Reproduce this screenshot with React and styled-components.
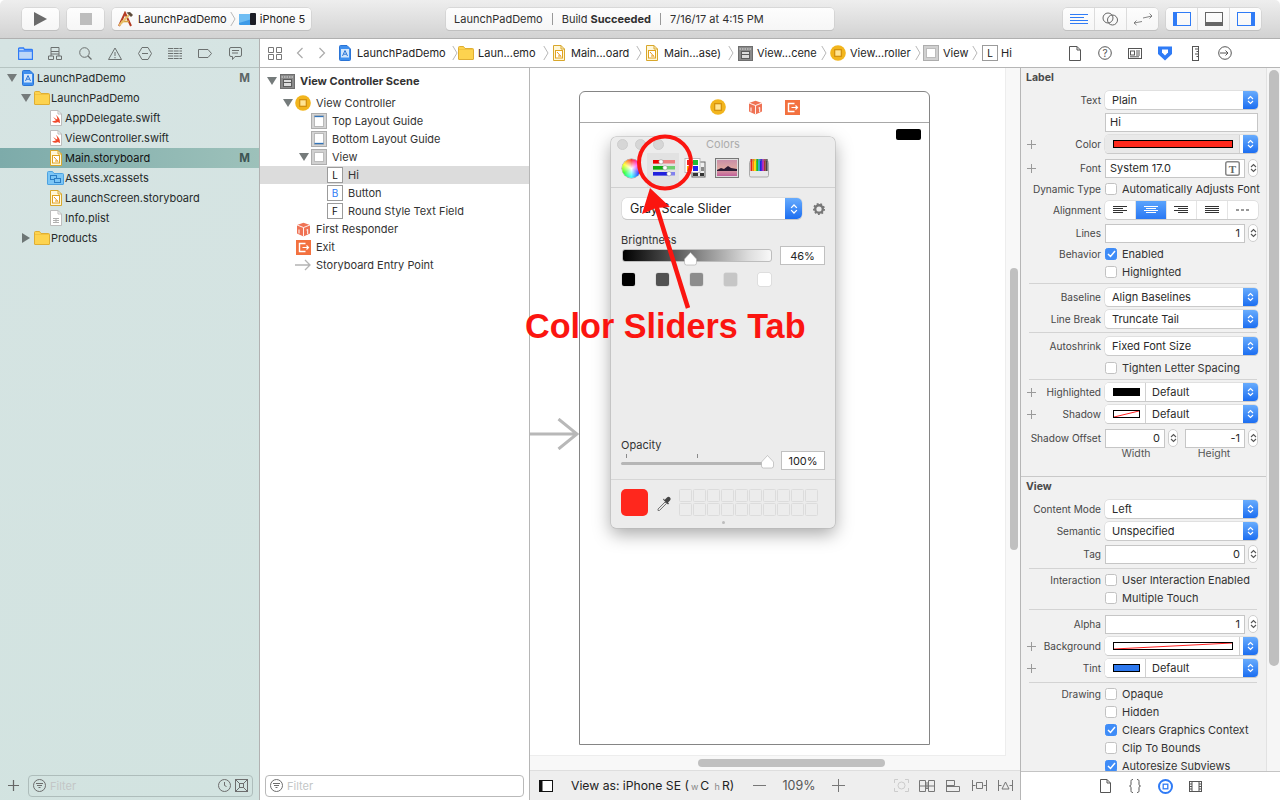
import React from 'react';
import styled, { createGlobalStyle } from 'styled-components';

const Global = createGlobalStyle`
  html, body { margin: 0; padding: 0; background: #fff; }
  * { box-sizing: border-box; }
  body { font-family: "Inter", "Liberation Sans", sans-serif; font-size: 11px; color: #242424; -webkit-font-smoothing: antialiased; }
`;

const Window = styled.div`position: relative; width: 1280px; height: 800px; overflow: hidden; display: flex; flex-direction: column; background: #fff;`;

/* ---------- toolbar ---------- */
const Toolbar = styled.header`
  height: 39px; flex: none; display: flex; align-items: flex-start; padding: 8px 19px 0 22px; gap: 8px;
  background: linear-gradient(#eeeeee, #d2d2d2); border-bottom: 1px solid #b0b0b0; border-radius: 5px 5px 0 0;
`;
const ToolButton = styled.div`
  height: 22px; width: ${p => p.$w}px; background: linear-gradient(#fdfdfd, #f6f6f6); border-radius: 4px;
  box-shadow: 0 0 0 .5px #c8c8c8, 0 1px 0 #b9b9b9; display: flex; align-items: center; justify-content: center; flex: none;
`;
const Scheme = styled(ToolButton)`justify-content: flex-start; padding-left: 5px; font-size: 11px; white-space: nowrap;`;
const SchemeName = styled.span`margin: 0 3px 0 4px;`;
const SchemeGap = styled.span`width: 3px; flex: none;`;
const Activity = styled(ToolButton)`justify-content: flex-start; padding-left: 8px; margin-left: 127px; font-size: 11px; color: #303030; white-space: nowrap;`;
const Bold = styled.b`font-weight: 700; margin-left: 3px;`;
const VBar = styled.span`width: 1px; height: 12px; background: #999; margin: 0 9px 0 ${p => p.$ml || 9}px;`;
const RightTools = styled.div`margin-left: auto; display: flex; gap: 8px;`;
const Segment = styled.span`flex: 1; height: 100%; display: flex; align-items: center; justify-content: center; & + & { border-left: 1px solid #dcdcdc; }`;

/* ---------- main columns ---------- */
const Body = styled.div`flex: 1; display: flex; min-height: 0;`;
const Navigator = styled.aside`width: 260px; flex: none; display: flex; flex-direction: column; background: linear-gradient(160deg, #d6e4e3, #d2e3e0); border-right: 1px solid #b2b2b2;`;
const NavTabs = styled.div`height: 29px; flex: none; display: flex; align-items: center; padding-left: 10px; border-bottom: 1px solid #b6c4c2;`;
const TabSlot = styled.span`width: 30px; display: flex; justify-content: center; flex: none;`;
const NavList = styled.div`flex: 1;`;
const NavRow = styled.div`
  height: 20px; display: flex; align-items: center; padding: 0 9px 0 ${p => p.$depth * 14 + 6}px; font-size: 11px; color: ${p => p.$sel ? '#111' : '#252a2a'};
  background: ${p => p.$sel ? 'linear-gradient(90deg,#7dabaa,#9dc1ba)' : 'transparent'};
`;
const TriSlot = styled.span`width: 12px; flex: none; display: flex; justify-content: center;`;
const Tri = styled.span`
  width: 0; height: 0;
  ${p => p.$right
    ? 'border-top:5px solid transparent;border-bottom:5px solid transparent;border-left:8px solid #6d7675;'
    : 'border-left:5px solid transparent;border-right:5px solid transparent;border-top:8px solid #757b7b;'}
`;
const IconSlot = styled.span`width: 19px; flex: none; display: flex; justify-content: center; align-items: center;`;
const Badge = styled.b`margin-left: auto; color: ${p => p.$c || '#5d6665'}; font-size: 11.5px; font-weight: 700;`;
const FilterBar = styled.div`height: 29px; flex: none; display: flex; align-items: center; padding: 0 ${p => p.$pr || 6}px 0 ${p => p.$pl || 5}px; gap: 5px;`;
const FilterField = styled.div`flex: 1; height: 22px; margin-left: ${p => p.$ml || 0}px; border: 1px solid ${p => p.$tone || '#b9b9b9'}; border-radius: 4px; display: flex; align-items: center; padding: 0 4px; gap: 4px;`;
const FilterText = styled.span`color: #c3c6c6; font-size: 11px; flex: 1;`;

const Editor = styled.main`flex: 1; min-width: 0; display: flex; flex-direction: column;`;
const JumpBar = styled.nav`height: 29px; flex: none; display: flex; align-items: center; padding-left: 8px; border-bottom: 1px solid #b6b6b6; background: #fff; font-size: 11px; white-space: nowrap;`;
const JumpNav = styled.span`width: ${p => p.$w}px; flex: none; display: flex; align-items: center; gap: 14px;`;
const JumpItem = styled.span`width: ${p => p.$w}px; flex: none; display: flex; align-items: center; gap: ${p => p.$gap || 4}px; padding-right: 4px;`;
const JumpChevron = styled.span`margin-left: auto; display: flex;`;
const Split = styled.div`flex: 1; min-height: 0; display: flex;`;
const Outline = styled.section`width: 270px; flex: none; display: flex; flex-direction: column; border-right: 1px solid #b6b6b6;`;
const SceneTitle = styled.div`height: 26px; display: flex; align-items: center; padding-left: 6px; font-weight: 700; font-size: 11px; color: #333;`;
const OutList = styled.div`flex: 1;`;
const OutRow = styled.div`height: 18px; display: flex; align-items: center; padding-left: ${p => p.$depth * 16 + 6}px; font-size: 11px; color: #333; background: ${p => p.$sel ? '#dcdcdc' : 'transparent'};`;
const OutIcon = styled.span`width: 22px; flex: none; display: flex; justify-content: center; align-items: center; padding-right: 4px;`;
const LetterBox = styled.span`width: 16px; height: 16px; border: 1px solid #9b9b9b; background: #fff; display: flex; align-items: center; justify-content: center; font-size: 10px; color: ${p => p.$c || '#111'}; flex: none;`;

const Canvas = styled.section`flex: 1; min-width: 0; display: flex; flex-direction: column; border-right: 1px solid #b6b6b6;`;
const CanvasMain = styled.div`flex: 1; min-height: 0; display: flex;`;
const CanvasCol = styled.div`flex: 1; min-width: 0; display: flex; flex-direction: column;`;
const Stage = styled.div`flex: 1; position: relative; padding: 23px 0 0 49px; background: #fff; border-bottom: 1px solid #ededed; border-right: 1px solid #ededed; overflow: hidden;`;
const HScrollTrack = styled.div`height: 14px; flex: none; background: #f8f8f8; padding: 3px 0 0 168px;`;
const HThumb = styled.div`width: 187px; height: 8px; border-radius: 4px; background: #c0c0c0;`;
const VScrollTrack = styled.div`width: 14px; flex: none; background: #f8f8f8; padding: 200px 0 0 4px;`;
const VThumb = styled.div`width: 8px; height: 282px; border-radius: 4px; background: #c0c0c0;`;
const Device = styled.div`width: 351px; height: 654px; border: 1px solid #858585; border-radius: 6px 6px 0 0; display: flex; flex-direction: column;`;
const DeviceBar = styled.div`height: 31px; flex: none; border-bottom: 1px solid #a8a8a8; display: flex; align-items: center; justify-content: center; gap: 22px;`;
const StatusRow = styled.div`display: flex; justify-content: flex-end; padding: 6px 8px 0 0;`;
const Battery = styled.div`width: 25px; height: 11px; border-radius: 2px; background: #000;`;
const EntryArrow = styled.svg`position: absolute; left: 0; top: 350px;`;
const CanvasBar = styled.div`height: 30px; flex: none; display: flex; align-items: center; background: #eeeeee; border-top: 1px solid #dedede; padding-left: 9px; font-size: 12.2px; color: #222;`;
const ViewAs = styled.span`margin-left: 18px; width: 182px; flex: none; white-space: nowrap;`;
const SmallGray = styled.small`font-size: 9px; color: #888; margin: 0 2px;`;
const Zoom = styled.span`width: 46px; text-align: center; color: #555; font-size: 12.5px;`;
const BarTool = styled.span`width: 26px; flex: none; display: flex; justify-content: center;`;
const BarSpacer = styled.span`width: ${p => p.$w}px; flex: none;`;

/* ---------- inspector ---------- */
const Inspector = styled.aside`width: 259px; flex: none; display: flex; flex-direction: column; background: #f1f1f1;`;
const InspTabs = styled.div`height: 29px; flex: none; display: flex; align-items: center; padding-left: 39px; background: #fff; border-bottom: 1px solid #b6b6b6;`;
const InspScroll = styled.div`flex: 1; min-height: 0; display: flex;`;
const InspBody = styled.div`flex: 1; min-width: 0; overflow: hidden;`;
const InspTrack = styled.div`width: 14px; flex: none; background: #f6f6f6; border-left: 1px solid #e2e2e2; padding: 2px 0 0 2px;`;
const InspThumb = styled.div`width: 10px; height: 596px; border-radius: 5px; background: #bfbfbf;`;
const SectionTitle = styled.div`height: 18px; display: flex; align-items: center; padding-left: 5px; font-weight: 700; font-size: 10.5px; color: #4a4a4a;`;
const Row = styled.div`display: flex; align-items: center; height: ${p => p.$h || 22}px; margin-top: ${p => p.$mt || 0}px; padding-right: 8px;`;
const Label = styled.span`width: 80px; margin-right: 4px; flex: none; display: flex; align-items: center; justify-content: flex-end; font-size: 10.1px; color: #484848; white-space: nowrap;`;
const Plus = styled.span`margin-right: auto; margin-left: 6px; display: flex;`;
const Popup = styled.div`
  flex: 1; min-width: 0; height: 18px; display: flex; align-items: center; background: #fff; border-radius: 4px;
  box-shadow: 0 0 0 .5px #cfcfcf, 0 1px 0 #c4c4c4; overflow: hidden; font-size: 11px; color: #2a2a2a;
`;
const PopupText = styled.span`flex: 1; padding-left: ${p => p.$pl || 7}px; white-space: nowrap;`;
const PopupRest = styled.span`flex: 1;`;
const PopupArrows = styled.span`width: 15px; height: 100%; flex: none; background: linear-gradient(#68acfd, #1c6ef1); display: flex; align-items: center; justify-content: center;`;
const WellCell = styled.span`flex: none; height: 100%; padding-left: 8px; padding-right: ${p => p.$pr}px; display: flex; align-items: center; width: ${p => p.$w}px; background: ${p => p.$gray ? '#e9e9e9' : '#fff'}; border-right: 1px solid #d0d0d0;`;
const Swatch = styled.span`flex: 1; height: 8px; border: 1px solid #000; background: ${p => p.$bg || '#fff'}; display: flex;`;
const Field = styled.div`
  flex: ${p => p.$w ? 'none' : 1}; width: ${p => p.$w ? p.$w + 'px' : 'auto'}; margin-left: ${p => p.$ml || 0}px; min-width: 0; height: 19px; background: #fff; border: 1px solid #c6c6c6; display: flex; align-items: center;
  padding: 0 4px; justify-content: ${p => p.$right ? 'flex-end' : 'flex-start'}; font-size: 11px; color: #2a2a2a;
`;
const FieldText = styled.span`flex: 1; white-space: nowrap;`;
const Stepper = styled.span`width: 10px; height: 18px; margin-left: ${p => p.$ml || 3}px; flex: none; background: #fff; border: .5px solid #cfcfcf; border-radius: 5px; display: flex; align-items: center; justify-content: center;`;
const Check = styled.span`width: 12px; height: 12px; flex: none; border-radius: 2.5px; display: flex; align-items: center; justify-content: center; border: 1px solid ${p => p.$on ? '#3f8cf7' : '#c2c2c2'}; background: ${p => p.$on ? '#3f8cf7' : '#fff'};`;
const CheckText = styled.span`margin-left: 5px; font-size: 11px; color: #333; white-space: nowrap;`;
const Divider = styled.div`height: 1px; margin: ${p => p.$mt || 2}px 9px 0 8px; background: #d3d3d3;`;
const SectionRule = styled.div`height: 1px; margin-top: ${p => p.$mt}px; background: #c9c9c9;`;
const Seg = styled.div`flex: 1; height: 18px; display: flex; background: #fff; border-radius: 4px; overflow: hidden; box-shadow: 0 0 0 .5px #cfcfcf, 0 1px 0 #c4c4c4;`;
const SegCell = styled.span`flex: 1; display: flex; align-items: center; justify-content: center; background: ${p => p.$on ? 'linear-gradient(#5aa3fc,#2a78f3)' : 'transparent'}; & + & { border-left: 1px solid #e4e4e4; }`;
const Caption = styled.span`width: ${p => p.$w}px; margin-left: ${p => p.$ml || 0}px; flex: none; text-align: center; font-size: 10.5px; color: #555;`;
const Library = styled.div`height: 29px; flex: none; background: #fff; border-top: 1px solid #c4c4c4; display: flex; align-items: center; padding-left: 69px;`;

/* ---------- colours panel ---------- */
const Panel = styled.div`position: absolute; left: 611px; top: 137px; width: 224px; height: 391px; background: #ececec; border-radius: 5px; box-shadow: 0 0 0 .5px #b6b6b6, 0 6px 18px rgba(0,0,0,.35); display: flex; flex-direction: column;`;
const PanelTitleBar = styled.div`height: 14px; flex: none; display: flex; align-items: center; padding-left: 6px; gap: 7px;`;
const Light = styled.span`width: 11px; height: 11px; border-radius: 50%; background: #d6d6d6; border: .5px solid #cdcdcd;`;
const PanelTitle = styled.span`margin-left: 35px; color: #ababab; font-size: 11px; line-height: 16px;`;
const PanelTabs = styled.div`height: 35px; margin-top: 2px; flex: none; display: flex; padding-left: 4px; border-bottom: 1px solid #d0d0d0;`;
const PanelTab = styled.span`width: 32px; flex: none; display: flex; align-items: center; justify-content: center; padding-bottom: 4px; background: ${p => p.$on ? '#e2e2e2' : 'transparent'};`;
const PopRow = styled.div`height: 21px; margin-top: 10px; padding-left: 11px; display: flex; align-items: center; flex: none;`;
const PanelPopup = styled.div`width: 180px; height: 21px; background: #fff; border-radius: 5px; box-shadow: 0 0 0 .5px #cfcfcf, 0 1px 0 #bdbdbd; overflow: hidden; display: flex; align-items: center; font-size: 12.5px;`;
const PanelPopupText = styled.span`flex: 1; padding-left: 8px; color: #222;`;
const PanelArrows = styled(PopupArrows)`width: 17px;`;
const Gear = styled.span`margin-left: 11px; display: flex;`;
const SliderLabel = styled.div`height: 13px; margin-top: ${p => p.$mt}px; padding-left: 10px; font-size: 11px; color: #333; flex: none; line-height: 15px;`;
const SliderRow = styled.div`height: 19px; display: flex; align-items: center; padding-left: ${p => p.$pl}px; flex: none;`;
const GrayTrack = styled.div`position: relative; width: 150px; height: 13px; border-radius: 3px; border: .5px solid #bdbdbd; background: linear-gradient(90deg,#000,#4a4a4a 30%,#8f8f8f 55%,#ddd 85%,#f8f8f8); `;
const OpacityTrack = styled.div`position: relative; width: 147px; height: 3px; margin-top: 6px; background: #b6b6b6; border-radius: 2px;`;
const Thumb = styled.svg`position: absolute; left: ${p => p.$x}px; top: ${p => p.$y}px;`;
const Tick = styled.span`position: absolute; left: ${p => p.$x}px; top: -8px; width: 1px; height: 4px; background: #8a8a8a;`;
const PercentBox = styled.div`width: ${p => p.$w}px; height: 19px; margin-left: ${p => p.$ml}px; background: #fff; border: 1px solid #c0c0c0; flex: none; display: flex; align-items: center; justify-content: center; font-size: 11px;`;
const Swatches = styled.div`display: flex; gap: 21px; margin-top: 8px; padding-left: 11px; flex: none;`;
const Chip = styled.span`width: 13px; height: 13px; border-radius: 2px; background: ${p => p.$c}; box-shadow: 0 0 0 .5px rgba(0,0,0,.12);`;
const PanelFoot = styled.div`margin-top: 9px; border-top: 1px solid #d6d6d6; padding: 9px 0 0 10px; display: flex; align-items: flex-start; flex: none;`;
const BigChip = styled.div`width: 27px; height: 27px; border-radius: 5px; background: #ff271d; flex: none;`;
const Dropper = styled.span`width: 31px; height: 27px; flex: none; display: flex; align-items: center; justify-content: center;`;
const Wells = styled.div`display: grid; grid-template-columns: repeat(10, 13px); grid-auto-rows: 13px; gap: 1px;`;
const Well = styled.span`border: 1px solid #dcdcdc; border-radius: 1.5px;`;
const Grip = styled.div`width: 3px; height: 3px; border-radius: 50%; background: #bcbcbc; margin: 5px auto 0;`;
const WheelIcon = styled.span`width: 19px; height: 19px; border-radius: 50%; background: radial-gradient(circle at center,#fff 0,rgba(255,255,255,0) 65%), conic-gradient(#f33,#f3f,#33f,#3ff,#3f3,#ff3,#f33); box-shadow: 0 0 0 .5px #999;`;

/* ---------- annotation ---------- */
const MarkLayer = styled.svg`position: absolute; left: 0; top: 0; pointer-events: none;`;
const Callout = styled.div`position: absolute; left: 525px; top: 306px; font-family: "Liberation Sans", Arial, sans-serif; font-weight: 700; font-size: 34.2px; line-height: 40px; color: #fb1510; white-space: nowrap;`;

/* ---------- drawings ---------- */
const S = ({ w = 16, h = 16, vb, children, ...r }) => <svg width={w} height={h} viewBox={vb || `0 0 ${w} ${h}`} fill="none" style={{ flex: 'none', display: 'block' }} {...r}>{children}</svg>;
const G = '#6c7170';
const Blue = '#2f7bf6';
const Folder = ({ w = 16, h = 14 }) => <S w={w} h={h} vb="0 0 16 14"><path d="M.5 13V1.5A1 1 0 0 1 1.5.5h4L7 2.5h7.5a1 1 0 0 1 1 1V13a.5.5 0 0 1-.5.5H1a.5.5 0 0 1-.5-.5z" fill="#fdd34f" stroke="#dfae33" /><path d="M1 3.500h14" stroke="#f3c440" /></S>;
const Proj = () => <S w={12} h={16} vb="0 0 12 16"><path d="M.5 1.500a1 1 0 0 1 1-1H8L11.500 4v10.500a1 1 0 0 1-1 1h-9a1 1 0 0 1-1-1z" fill="#3f8fee" stroke="#2a74d6" /><rect x="2" y="4" width="8" height="8.500" fill="#d3e6fb" /><path d="M3.500 11 6 5.500 8.500 11M4.500 9.200h3" stroke="#2a74d6" strokeWidth="1" /></S>;
const Doc = ({ children, stroke = '#bdbdbd', fill = '#fff' }) => <S w={12} h={16}><path d="M.5.5H8L11.500 4v11.500H.5z" fill={fill} stroke={stroke} /><path d="M8 .5V4h3.500" stroke={stroke} />{children}</S>;
const Swift = () => <Doc><path d="M2 11.500c2 1.500 4.500 1.500 6 .5 1 .6 1.500 1 2 1-.2-1 0-2-.5-3.500-.7-2-2.200-3.500-3.500-4.500 1 1.500 1.500 3 1.200 4.500C5.800 9.200 4 7.800 3 6.800c1 1.400 2 2.700 3 3.500-1.200.8-2.800 1-4 1.200z" fill="#f0492c" /></Doc>;
const Story = () => <Doc stroke="#d8a72c" fill="#fff7d8"><rect x="2.500" y="5.500" width="7" height="7.500" fill="#fff" stroke="#e0a21f" /><path d="M4 7l4 4.500M5 11h3" stroke="#e79a18" /></Doc>;
const Assets = () => <S w={17} h={14}><path d="M.5 13V1.500a1 1 0 0 1 1-1h4L7 2.500h8.500a1 1 0 0 1 1 1V13a.5.5 0 0 1-.5.5H1a.5.5 0 0 1-.5-.5z" fill="#7cc6f5" stroke="#4da2e0" /><rect x="3.500" y="4.500" width="6" height="4" stroke="#2a7dc4" /><rect x="7.500" y="7.500" width="6" height="4" fill="#7cc6f5" stroke="#2a7dc4" /></S>;
const Plist = () => <Doc><path d="M3 8.500h6M3 10.500h6M3 12.500h6M6 8v5" stroke="#b0b0b0" /></Doc>;
const Scene = () => <S w={15} h={15}><rect x=".5" y=".5" width="14" height="14" fill="#8a8a8a" stroke="#6e6e6e" /><path d="M1.500 3h12" stroke="#ddd" strokeDasharray="1.500 1" /><rect x="3.500" y="5.500" width="8" height="7" fill="#dcdcdc" stroke="#5b5b5b" /><path d="M3 8.500h9" stroke="#5b5b5b" /></S>;
const VC = () => <S w={16} h={16}><circle cx="8" cy="8" r="7.800" fill="#f2b51d" /><rect x="4.700" y="4.700" width="6.600" height="6.600" fill="#ffe493" stroke="#d18d08" strokeWidth="1.200" /></S>;
const Cube = () => <S w={15} h={15}><path d="M7.500.8 14 3v8.500l-6.500 3-6.500-3V3z" fill="#ef7254" /><path d="M1 3l6.500 2.500L14 3M7.500 5.500v9" stroke="#fff" strokeWidth=".9" /><path d="M3 7.500v4M10.500 8l1.200-.5V12" stroke="#fff" strokeWidth="1" /></S>;
const ExitI = () => <S w={15} h={15}><rect width="15" height="15" fill="#f3713f" /><path d="M9.500 3.500h-6v8h6" stroke="#fff" strokeWidth="1.400" /><path d="M6.500 7.500h6M10.500 5.500l2 2-2 2" stroke="#fff" strokeWidth="1.200" /></S>;
const Guide = ({ bottom }) => <S w={16} h={16}><rect x=".5" y=".5" width="15" height="15" fill="#d4d4d4" stroke="#adadad" /><rect x="3.500" y="2.500" width="9" height="11" fill="#fff" stroke="#b9b9b9" /><path d={bottom ? 'M3.500 12.500h9' : 'M3.500 3.500h9'} stroke="#3274b9" strokeWidth="1.300" /></S>;
const ViewBox = () => <S w={16} h={16}><rect x=".5" y=".5" width="15" height="15" fill="#d0d0d0" stroke="#adadad" /><rect x="3.500" y="3.500" width="9" height="9" fill="#fff" stroke="#bcbcbc" /></S>;
const Entry = () => <S w={16} h={12}><path d="M0 6h15M10 1l5 5-5 5" stroke="#b4b4b4" strokeWidth="1.300" /></S>;
const XcodeI = () => <S w={17} h={17}><path d="M2 15 8 2l6 13" stroke="#b43b22" strokeWidth="2" /><path d="M4 10.500h8" stroke="#d9a441" strokeWidth="1.600" /><path d="M2 14.500 12 4" stroke="#e8c06a" strokeWidth="2" /><path d="M9.500 1.500 14 6l2-2-3-3z" fill="#5c4a3a" /></S>;
const PhoneI = () => <S w={17} h={14}><rect x="0" y="2" width="13" height="11" rx="1" fill="#3e9be8" /><path d="M0 2h13v5L0 11z" fill="#6fbdf3" /><rect x="11" y="1" width="6" height="12" rx="1" fill="#1c1d26" /></S>;
const Sep = ({ h = 16 }) => <S w={6} h={h} vb="0 0 6 16"><path d="M.8 1 5 8 .8 15" stroke="#b8b8b8" /></S>;
const UD = ({ c = '#fff', w = 7, h = 10 }) => <S w={w} h={h} vb="0 0 7 10"><path d="M1 4 3.500 1.500 6 4M1 6l2.500 2.500L6 6" stroke={c} strokeWidth="1.100" /></S>;
const PlusI = ({ s = 9, c = '#9a9a9a' }) => <S w={s} h={s} vb="0 0 9 9"><path d="M4.500 0v9M0 4.500h9" stroke={c} /></S>;
const Tick2 = () => <S w={9} h={8}><path d="M1 4l2.500 2.500L8 1" stroke="#fff" strokeWidth="1.500" /></S>;
const Strike = () => <svg width="100%" height="100%" viewBox="0 0 100 10" preserveAspectRatio="none" style={{ display: 'block' }}><path d="M0 10 100 0" stroke="#f22" strokeWidth="1" vectorEffect="non-scaling-stroke" /></svg>;
const Align = ({ kind, c = '#333' }) => {
  const L = { l: [[0, 14], [0, 10], [0, 14], [0, 10]], c: [[0, 14], [2, 10], [0, 14], [2, 10]], r: [[0, 14], [4, 10], [0, 14], [4, 10]], j: [[0, 14], [0, 14], [0, 14], [0, 14]] }[kind];
  return <S w={14} h={8}>{L.map(([x, w], i) => <path key={i} d={`M${x} ${i * 2 + 0.5}h${w}`} stroke={c} />)}</S>;
};
const Filter = ({ c = '#6d6d6d' }) => <S w={13} h={13}><circle cx="6.500" cy="6.500" r="6" stroke={c} /><path d="M3 4.500h7M4 6.500h5M5.500 8.500h2" stroke={c} /></S>;

const Check1 = ({ on, children }) => <><Check $on={on}>{on && <Tick2 />}</Check><CheckText>{children}</CheckText></>;
const Pop = ({ children }) => <Popup><PopupText>{children}</PopupText><PopupArrows><UD /></PopupArrows></Popup>;
const ColorPop = ({ strike, bg, narrow, text }) => (
  <Popup>
    {narrow
      ? <><WellCell $w={41} $pr={5}><Swatch $bg={bg}>{strike && <Strike />}</Swatch></WellCell><PopupText $pl={6}>{text}</PopupText></>
      : <><WellCell $w={135} $pr={6} $gray={!strike}><Swatch $bg={bg}>{strike && <Strike />}</Swatch></WellCell><PopupRest /></>}
    <PopupArrows><UD /></PopupArrows>
  </Popup>
);

export default function App() {
  return (
    <Window>
      <Global />
      <Toolbar>
        <ToolButton $w={37}><S w={15} h={14}><path d="M1 0l13 7-13 7z" fill="#6a6a6a" /></S></ToolButton>
        <ToolButton $w={37}><S w={12} h={12}><rect width="12" height="12" fill="#bdbdbd" /></S></ToolButton>
        <Scheme $w={199}>
          <XcodeI /><SchemeName>LaunchPadDemo</SchemeName><Sep /><SchemeGap /><PhoneI /><SchemeName>iPhone 5</SchemeName>
        </Scheme>
        <Activity $w={388}>LaunchPadDemo<VBar />Build<Bold>Succeeded</Bold><VBar />7/16/17 at 4:15 PM</Activity>
        <RightTools>
          <ToolButton $w={95}>
            <Segment><S w={18} h={12}><path d="M0 1.500h18M0 4.500h14M0 7.500h18M0 10.500h18" stroke={Blue} /></S></Segment>
            <Segment><S w={17} h={14}><circle cx="6" cy="6" r="5" stroke="#666" /><circle cx="10.500" cy="8" r="5" stroke="#666" /></S></Segment>
            <Segment><S w={20} h={13}><path d="M9 8.500 1 10M3.500 7.500 1 10l2.500 2M10 5 19 3M16.500.5 19 3l-2.500 2.500" stroke="#777" strokeWidth=".9" /></S></Segment>
          </ToolButton>
          <ToolButton $w={95}>
            <Segment><S w={18} h={14}><rect x=".5" y=".5" width="17" height="13" stroke={Blue} /><rect x="1" y="1" width="3" height="12" fill={Blue} /></S></Segment>
            <Segment><S w={18} h={14}><rect x=".5" y=".5" width="17" height="13" stroke="#666" /><rect x="1" y="10" width="16" height="3" fill="#666" /></S></Segment>
            <Segment><S w={18} h={14}><rect x=".5" y=".5" width="17" height="13" stroke={Blue} /><rect x="14" y="1" width="3" height="12" fill={Blue} /></S></Segment>
          </ToolButton>
        </RightTools>
      </Toolbar>

      <Body>
        <Navigator>
          <NavTabs>
            <TabSlot><S w={15} h={13}><path d="M.5 12V2a1 1 0 0 1 1-1h4l1 1.500h7a1 1 0 0 1 1 1V12a.5.5 0 0 1-.5.5H1z" fill="#bcd6f8" stroke={Blue} strokeWidth="1.300" /><path d="M1 4h13" stroke={Blue} strokeWidth="1.300" /></S></TabSlot>
            <TabSlot><S w={14} h={13}><path d="M3 .5h8v4H3zM.5 9h5v3.500h-5zM8.500 9h5v3.500h-5zM3 7V4.500M3 7h8v2M3 7v2M11 7V4.500" stroke={G} /></S></TabSlot>
            <TabSlot><S w={13} h={13}><circle cx="5.500" cy="5.500" r="4.800" stroke={G} /><path d="M9 9l3.500 3.500" stroke={G} strokeWidth="1.300" /></S></TabSlot>
            <TabSlot><S w={14} h={13}><path d="M7 1l6.500 11.500H.5zM7 5v4M7 10v1.300" stroke={G} /></S></TabSlot>
            <TabSlot><S w={14} h={13}><path d="M4 .5h6L13.500 6.500 10 12.500H4L.5 6.500zM4 6.500h6" stroke={G} /></S></TabSlot>
            <TabSlot><S w={14} h={11}><path d="M0 .5h14M0 3h14M0 5.500h14M0 8h14M0 10.500h14" stroke={G} strokeDasharray="5 .7" /></S></TabSlot>
            <TabSlot><S w={14} h={9}><path d="M.5.5H10l3.500 4-3.500 4H.5z" stroke={G} /></S></TabSlot>
            <TabSlot><S w={13} h={13}><path d="M2 .5h9A1.500 1.500 0 0 1 12.500 2v6A1.500 1.500 0 0 1 11 9.500H6L3.500 12.500v-3H2A1.500 1.500 0 0 1 .5 8V2A1.500 1.500 0 0 1 2 .5zM3 3.500h7M3 6h6" stroke={G} /></S></TabSlot>
          </NavTabs>
          <NavList>
            <NavRow $depth={0}><TriSlot><Tri /></TriSlot><IconSlot><Proj /></IconSlot>LaunchPadDemo<Badge>M</Badge></NavRow>
            <NavRow $depth={1}><TriSlot><Tri /></TriSlot><IconSlot><Folder /></IconSlot>LaunchPadDemo</NavRow>
            <NavRow $depth={2}><TriSlot /><IconSlot><Swift /></IconSlot>AppDelegate.swift</NavRow>
            <NavRow $depth={2}><TriSlot /><IconSlot><Swift /></IconSlot>ViewController.swift</NavRow>
            <NavRow $depth={2} $sel><TriSlot /><IconSlot><Story /></IconSlot>Main.storyboard<Badge $c="#3e5553">M</Badge></NavRow>
            <NavRow $depth={2}><TriSlot /><IconSlot><Assets /></IconSlot>Assets.xcassets</NavRow>
            <NavRow $depth={2}><TriSlot /><IconSlot><Story /></IconSlot>LaunchScreen.storyboard</NavRow>
            <NavRow $depth={2}><TriSlot /><IconSlot><Plist /></IconSlot>Info.plist</NavRow>
            <NavRow $depth={1}><TriSlot><Tri $right /></TriSlot><IconSlot><Folder /></IconSlot>Products</NavRow>
          </NavList>
          <FilterBar $pl={8} $pr={6}>
            <PlusI s={11} c="#666" />
            <FilterField $tone="#aebdbb" $ml={4}>
              <Filter /><FilterText>Filter</FilterText>
              <S w={13} h={13}><circle cx="6.500" cy="6.500" r="6" stroke="#6d6d6d" /><path d="M6.500 3v3.500l2 1" stroke="#6d6d6d" /></S>
              <S w={13} h={13}><rect x=".5" y=".5" width="12" height="12" stroke="#6d6d6d" /><path d="M1 1l3.500 3.500M12 1 8.500 4.500M1 12l3.500-3.500M12 12 8.500 8.500" stroke="#6d6d6d" /><rect x="4.500" y="4.500" width="4" height="4" stroke="#6d6d6d" /></S>
            </FilterField>
          </FilterBar>
        </Navigator>

        <Editor>
          <JumpBar>
            <JumpNav $w={71}>
              <S w={14} h={13}><path d="M.5.5h5v5h-5zM8.500.5h5v5h-5zM.5 7.500h5v5h-5zM8.500 7.500h5v5h-5z" stroke="#777" /></S>
              <S w={8} h={12}><path d="M6.500 1 1.500 6l5 5" stroke="#aaa" strokeWidth="1.200" /></S>
              <S w={8} h={12}><path d="M1.500 1l5 5-5 5" stroke="#aaa" strokeWidth="1.200" /></S>
            </JumpNav>
            <JumpItem $w={119} $gap={6}><Proj />LaunchPadDemo<JumpChevron><Sep /></JumpChevron></JumpItem>
            <JumpItem $w={95}><Folder />Laun...emo<JumpChevron><Sep /></JumpChevron></JumpItem>
            <JumpItem $w={93} $gap={6}><Story />Main...oard<JumpChevron><Sep /></JumpChevron></JumpItem>
            <JumpItem $w={92} $gap={6}><Story />Main...ase)<JumpChevron><Sep /></JumpChevron></JumpItem>
            <JumpItem $w={92}><Scene />View...cene<JumpChevron><Sep /></JumpChevron></JumpItem>
            <JumpItem $w={93}><VC />View...roller<JumpChevron><Sep /></JumpChevron></JumpItem>
            <JumpItem $w={59}><ViewBox />View<JumpChevron><Sep /></JumpChevron></JumpItem>
            <JumpItem $w={40} $gap={3}><LetterBox>L</LetterBox>Hi</JumpItem>
          </JumpBar>
          <Split>
            <Outline>
              <OutList>
                <SceneTitle><TriSlot><Tri /></TriSlot><OutIcon><Scene /></OutIcon>View Controller Scene</SceneTitle>
                <OutRow $depth={1}><TriSlot><Tri /></TriSlot><OutIcon><VC /></OutIcon>View Controller</OutRow>
                <OutRow $depth={2}><TriSlot /><OutIcon><Guide /></OutIcon>Top Layout Guide</OutRow>
                <OutRow $depth={2}><TriSlot /><OutIcon><Guide bottom /></OutIcon>Bottom Layout Guide</OutRow>
                <OutRow $depth={2}><TriSlot><Tri /></TriSlot><OutIcon><ViewBox /></OutIcon>View</OutRow>
                <OutRow $depth={3} $sel><TriSlot /><OutIcon><LetterBox>L</LetterBox></OutIcon>Hi</OutRow>
                <OutRow $depth={3}><TriSlot /><OutIcon><LetterBox $c="#2f7bf6">B</LetterBox></OutIcon>Button</OutRow>
                <OutRow $depth={3}><TriSlot /><OutIcon><LetterBox>F</LetterBox></OutIcon>Round Style Text Field</OutRow>
                <OutRow $depth={1}><TriSlot /><OutIcon><Cube /></OutIcon>First Responder</OutRow>
                <OutRow $depth={1}><TriSlot /><OutIcon><ExitI /></OutIcon>Exit</OutRow>
                <OutRow $depth={1}><TriSlot /><OutIcon><Entry /></OutIcon>Storyboard Entry Point</OutRow>
              </OutList>
              <FilterBar $pl={5} $pr={5}><FilterField><Filter /><FilterText>Filter</FilterText></FilterField></FilterBar>
            </Outline>
            <Canvas>
              <CanvasMain>
                <CanvasCol>
                  <Stage>
                    <Device>
                      <DeviceBar><VC /><Cube /><ExitI /></DeviceBar>
                      <StatusRow><Battery /></StatusRow>
                    </Device>
                    <EntryArrow width="49" height="32" viewBox="0 0 49 32"><path d="M0 16h46M28.500 1 47 16 28.500 31" stroke="#b8b8b8" strokeWidth="3" fill="none" /></EntryArrow>
                  </Stage>
                  <HScrollTrack><HThumb /></HScrollTrack>
                </CanvasCol>
                <VScrollTrack><VThumb /></VScrollTrack>
              </CanvasMain>
              <CanvasBar>
                <S w={14} h={12}><rect x=".5" y=".5" width="13" height="11" fill="#fff" stroke="#111" /><rect x="1" y="1" width="2.500" height="10" fill="#111" /></S>
                <ViewAs>View as: iPhone SE (<SmallGray>w</SmallGray>C <SmallGray>h</SmallGray>R)</ViewAs>
                <S w={13} h={1}><path d="M0 .5h13" stroke="#777" /></S>
                <BarSpacer $w={10} /><Zoom>109%</Zoom><BarSpacer $w={10} />
                <S w={13} h={13}><path d="M6.500 0v13M0 6.500h13" stroke="#777" /></S>
                <BarSpacer $w={43} />
                <BarTool><S w={15} h={13}><path d="M4 .5H.5V4M11 .5h3.500V4M4 12.500H.5V9M11 12.500h3.500V9" stroke="#ccc" /><circle cx="7.500" cy="6.500" r="3.500" stroke="#ccc" /></S></BarTool>
                <BarTool><S w={16} h={12}><path d="M.5.5h6v11h-6zM9.500.5h6v11h-6zM0 6h16M8 2v7M6 7l2 2 2-2" stroke="#777" /></S></BarTool>
                <BarTool><S w={15} h={12}><path d="M.5 0v12M.5.5h8v5h-8zM.5 6.500h13v5H.5z" stroke="#777" /></S></BarTool>
                <BarTool><S w={15} h={11}><path d="M.5 0v11M14.500 0v11M.5 5.500h3M11.500 5.500h3M4.500 2.500h6v6h-6z" stroke="#777" /></S></BarTool>
                <BarTool><S w={15} h={11}><path d="M.5 0v11M14.500 0v11M.5 5.500h3M11.500 5.500h3M7.500 2 11 9H4z" stroke="#777" /></S></BarTool>
              </CanvasBar>
            </Canvas>
          </Split>
        </Editor>

        <Inspector>
          <InspTabs>
            <TabSlot><S w={12} h={15}><path d="M.5.5H8L11.500 4v10.500H.5zM8 .5V4h3.500" stroke="#555" /></S></TabSlot>
            <TabSlot><S w={14} h={14}><circle cx="7" cy="7" r="6.300" stroke="#555" /><text x="7" y="10.500" textAnchor="middle" fontSize="10" fontFamily="Inter" fill="#555">?</text></S></TabSlot>
            <TabSlot><S w={14} h={11}><rect x=".5" y=".5" width="13" height="10" stroke="#555" /><rect x="2.500" y="3" width="4" height="4" stroke="#555" /><path d="M8 3h4M8 5h4M8 7h4M2 8.800h9" stroke="#555" /></S></TabSlot>
            <TabSlot><S w={16} h={17}><path d="M1 1.500h14v7.500l-7 6.500-7-6.500z" fill={Blue} /><path d="M5 4.500v3l3 3 3-3v-3z" fill="#fff" /></S></TabSlot>
            <TabSlot><S w={7} h={15}><rect x=".5" y=".5" width="6" height="14" stroke="#555" /><path d="M3 3h4M4.500 5.500H7M3 8h4M4.500 10.500H7" stroke="#555" /></S></TabSlot>
            <TabSlot><S w={14} h={14}><circle cx="7" cy="7" r="6.300" stroke="#555" /><path d="M2 7h8M7.500 4.500 10 7l-2.500 2.500" stroke="#555" /></S></TabSlot>
          </InspTabs>
          <InspScroll>
            <InspBody>
              <SectionTitle>Label</SectionTitle>
              <Row $mt={3}><Label>Text</Label><Pop>Plain</Pop></Row>
              <Row><Label /><Field>Hi</Field></Row>
              <Row><Label><Plus><PlusI /></Plus>Color</Label><ColorPop bg="#ff2a1d" /></Row>
              <Row $mt={2}><Label><Plus><PlusI /></Plus>Font</Label><Field><FieldText>System 17.0</FieldText><S w={15} h={15}><rect x=".75" y=".75" width="13.500" height="13.500" rx="2" fill="#fff" stroke="#888" strokeWidth="1.500" /><text x="7.500" y="12" textAnchor="middle" fontSize="11" fontWeight="700" fontFamily="Liberation Serif" fill="#666">T</text></S></Field><Stepper><UD c="#555" /></Stepper></Row>
              <Row $h={18} $mt={1}><Label>Dynamic Type</Label><Check1>Automatically Adjusts Font</Check1></Row>
              <Row $mt={1}><Label>Alignment</Label><Seg>
                <SegCell><Align kind="l" /></SegCell><SegCell $on><Align kind="c" c="#fff" /></SegCell><SegCell><Align kind="r" /></SegCell><SegCell><Align kind="j" /></SegCell>
                <SegCell><S w={14} h={2}><path d="M0 1h14" stroke="#333" strokeDasharray="3 2" /></S></SegCell>
              </Seg></Row>
              <Row $mt={1}><Label>Lines</Label><Field $right>1</Field><Stepper><UD c="#555" /></Stepper></Row>
              <Row $h={18} $mt={1}><Label>Behavior</Label><Check1 on>Enabled</Check1></Row>
              <Row $h={18}><Label /><Check1>Highlighted</Check1></Row>
              <Divider />
              <Row $mt={2}><Label>Baseline</Label><Pop>Align Baselines</Pop></Row>
              <Row><Label>Line Break</Label><Pop>Truncate Tail</Pop></Row>
              <Divider />
              <Row $mt={2}><Label>Autoshrink</Label><Pop>Fixed Font Size</Pop></Row>
              <Row $h={18} $mt={2}><Label /><Check1>Tighten Letter Spacing</Check1></Row>
              <Divider />
              <Row $mt={1}><Label><Plus><PlusI /></Plus>Highlighted</Label><ColorPop narrow bg="#000" text="Default" /></Row>
              <Row><Label><Plus><PlusI /></Plus>Shadow</Label><ColorPop narrow strike text="Default" /></Row>
              <Row $h={20} $mt={3}><Label>Shadow Offset</Label><Field $right $w={60}>0</Field><Stepper><UD c="#555" /></Stepper><Field $right $w={60} $ml={7}>-1</Field><Stepper><UD c="#555" /></Stepper></Row>
              <Row $h={11}><Label /><Caption $w={60} $ml={1}>Width</Caption><Caption $w={60} $ml={18}>Height</Caption></Row>
              <SectionRule $mt={17} />
              <SectionTitle>View</SectionTitle>
              <Row $mt={3}><Label>Content Mode</Label><Pop>Left</Pop></Row>
              <Row><Label>Semantic</Label><Pop>Unspecified</Pop></Row>
              <Row $mt={1}><Label>Tag</Label><Field $right>0</Field><Stepper><UD c="#555" /></Stepper></Row>
              <Divider $mt={3} />
              <Row $h={18} $mt={2}><Label>Interaction</Label><Check1>User Interaction Enabled</Check1></Row>
              <Row $h={18}><Label /><Check1>Multiple Touch</Check1></Row>
              <Divider />
              <Row $mt={3}><Label>Alpha</Label><Field $right>1</Field><Stepper><UD c="#555" /></Stepper></Row>
              <Row><Label><Plus><PlusI /></Plus>Background</Label><ColorPop strike /></Row>
              <Row><Label><Plus><PlusI /></Plus>Tint</Label><ColorPop narrow bg="#2d78ee" text="Default" /></Row>
              <Divider $mt={3} />
              <Row $h={18} $mt={2}><Label>Drawing</Label><Check1>Opaque</Check1></Row>
              <Row $h={18}><Label /><Check1>Hidden</Check1></Row>
              <Row $h={18}><Label /><Check1 on>Clears Graphics Context</Check1></Row>
              <Row $h={18}><Label /><Check1>Clip To Bounds</Check1></Row>
              <Row $h={18}><Label /><Check1 on>Autoresize Subviews</Check1></Row>
            </InspBody>
            <InspTrack><InspThumb /></InspTrack>
          </InspScroll>
          <Library>
            <TabSlot><S w={11} h={14}><path d="M.5.5H7L10.500 4v9.500H.5zM7 .5V4h3.500" stroke="#555" /></S></TabSlot>
            <TabSlot><S w={12} h={14}><path d="M4 .5C2.500.5 2 1 2 2.500v2.500C2 6.200 1.500 7 .5 7c1 0 1.500.8 1.500 2v2.500C2 13 2.500 13.500 4 13.500M8 .5c1.500 0 2 .5 2 2v2.500c0 1.200.5 2 1.500 2-1 0-1.500.8-1.500 2v2.500c0 1.500-.5 2-2 2" stroke="#555" /></S></TabSlot>
            <TabSlot><S w={15} h={15}><circle cx="7.500" cy="7.500" r="6.500" stroke={Blue} strokeWidth="2" /><rect x="5.200" y="5.200" width="4.600" height="4.600" stroke={Blue} strokeWidth="1.300" /></S></TabSlot>
            <TabSlot><S w={13} h={11}><rect x=".5" y=".5" width="12" height="10" stroke="#555" /><path d="M3 1v9M10 1v9" stroke="#555" /><path d="M1 3h2M1 5.500h2M1 8h2M10 3h2M10 5.500h2M10 8h2" stroke="#555" /></S></TabSlot>
          </Library>
        </Inspector>
      </Body>

      <Panel>
        <PanelTitleBar><Light /><Light /><Light /><PanelTitle>Colors</PanelTitle></PanelTitleBar>
        <PanelTabs>
          <PanelTab><WheelIcon /></PanelTab>
          <PanelTab $on>
            <S w={23} h={18}>
              <rect x="1" y="1" width="22" height="3.500" fill="#ee8080" /><rect x="1" y="1" width="8" height="3.500" fill="#e00" />
              <rect x="1" y="7" width="22" height="3.500" fill="#70d070" /><rect x="1" y="7" width="12" height="3.500" fill="#1a1" />
              <rect x="1" y="13" width="22" height="3.500" fill="#8080f0" /><rect x="1" y="13" width="16" height="3.500" fill="#22d" />
              <circle cx="9" cy="2.800" r="2.200" fill="#fff" stroke="#888" strokeWidth=".5" /><circle cx="13" cy="8.800" r="2.200" fill="#fff" stroke="#888" strokeWidth=".5" /><circle cx="17" cy="14.800" r="2.200" fill="#fff" stroke="#888" strokeWidth=".5" />
            </S>
          </PanelTab>
          <PanelTab>
            <S w={22} h={20}>
              <rect x="8" y="4" width="13" height="15" fill="#eee" stroke="#666" /><rect x="1" y="0.500" width="15" height="14" fill="#fff" stroke="#bbb" />
              <rect x="3" y="2" width="5" height="5" fill="#e22" /><rect x="9" y="2" width="5" height="5" fill="#2b3" /><rect x="3" y="8" width="5" height="5" fill="#fa0" /><rect x="9" y="8" width="5" height="5" fill="#22e" />
              <rect x="17" y="9" width="3" height="4" fill="#888" /><rect x="9" y="15" width="5" height="3" fill="#333" /><rect x="16" y="15" width="4" height="3" fill="#333" />
            </S>
          </PanelTab>
          <PanelTab>
            <S w={24} h={20}>
              <defs><linearGradient id="sky" x1="0" y1="0" x2="0" y2="1"><stop offset="0" stopColor="#c98fa8" /><stop offset=".55" stopColor="#dfa8a0" /><stop offset="1" stopColor="#c05f9a" /></linearGradient></defs>
              <rect x=".5" y=".5" width="23" height="19" fill="#ddd" stroke="#777" /><rect x="2" y="2" width="20" height="16" fill="url(#sky)" />
              <path d="M2 12l4-2 3 1 4-3 3 2 6 1v2H2z" fill="#2a1a33" />
            </S>
          </PanelTab>
          <PanelTab>
            <S w={20} h={20}>
              <rect x=".5" y="3" width="19" height="16" rx="1.500" fill="#e8e8e8" stroke="#aaa" />
              {['#d22', '#f80', '#fd0', '#2b2', '#2ac', '#22d', '#a2c', '#a33', '#444'].map((c, i) => <rect key={c} x={1.5 + i * 1.9} y="1" width="1.900" height="12" fill={c} />)}
              <path d="M1 2h18" stroke="#888" strokeDasharray="1 1" />
            </S>
          </PanelTab>
        </PanelTabs>
        <PopRow>
          <PanelPopup><PanelPopupText>Gray Scale Slider</PanelPopupText><PanelArrows><UD w={8} h={12} /></PanelArrows></PanelPopup>
          <Gear><S w={12} h={12}><circle cx="6" cy="6" r="3.800" stroke="#777" strokeWidth="2.400" /><circle cx="6" cy="6" r="5.200" stroke="#777" strokeWidth="1.600" strokeDasharray="1.800 1.800" /></S></Gear>
        </PopRow>
        <SliderLabel $mt={14}>Brightness</SliderLabel>
        <SliderRow $pl={11}>
          <GrayTrack><Thumb $x={61} $y={2} width="13" height="14" viewBox="0 0 13 14"><path d="M6.500 .5 12.500 7v4a2 2 0 0 1-2 2h-8a2 2 0 0 1-2-2V7z" fill="#fff" stroke="#aaa" strokeWidth=".6" /></Thumb></GrayTrack>
          <PercentBox $w={45} $ml={8}>46%</PercentBox>
        </SliderRow>
        <Swatches><Chip $c="#000" /><Chip $c="#515151" /><Chip $c="#8c8c8c" /><Chip $c="#c6c6c6" /><Chip $c="#fff" /></Swatches>
        <SliderLabel $mt={152}>Opacity</SliderLabel>
        <SliderRow $pl={10}>
          <OpacityTrack><Tick $x={5} /><Tick $x={76} /><Thumb $x={140} $y={-7} width="13" height="14" viewBox="0 0 13 14"><path d="M6.500 .5 12.500 7v4a2 2 0 0 1-2 2h-8a2 2 0 0 1-2-2V7z" fill="#fff" stroke="#aaa" strokeWidth=".6" /></Thumb></OpacityTrack>
          <PercentBox $w={44} $ml={13}>100%</PercentBox>
        </SliderRow>
        <PanelFoot>
          <BigChip />
          <Dropper><S w={16} h={16}><path d="M2 14l7-7 1.500 1.500-7 7H2z" fill="#e4e4e4" stroke="#777" /><path d="M8.500 5 11 2.500a2 2 0 0 1 3 3L12 7.500l1 1-1 1-5-5 1-1z" fill="#444" /></S></Dropper>
          <Wells>{Array.from({ length: 20 }, (_, i) => <Well key={i} />)}</Wells>
        </PanelFoot>
        <Grip />
      </Panel>

      <MarkLayer width="1280" height="800" viewBox="0 0 1280 800">
        <circle cx="665" cy="162.500" r="26" fill="none" stroke="#fb1510" strokeWidth="4" />
        <path d="M688 308 655 202" stroke="#fb1510" strokeWidth="4.500" />
        <path d="M650 188 642 214 656 208 670 207z" fill="#fb1510" />
      </MarkLayer>
      <Callout>Color Sliders Tab</Callout>
    </Window>
  );
}
